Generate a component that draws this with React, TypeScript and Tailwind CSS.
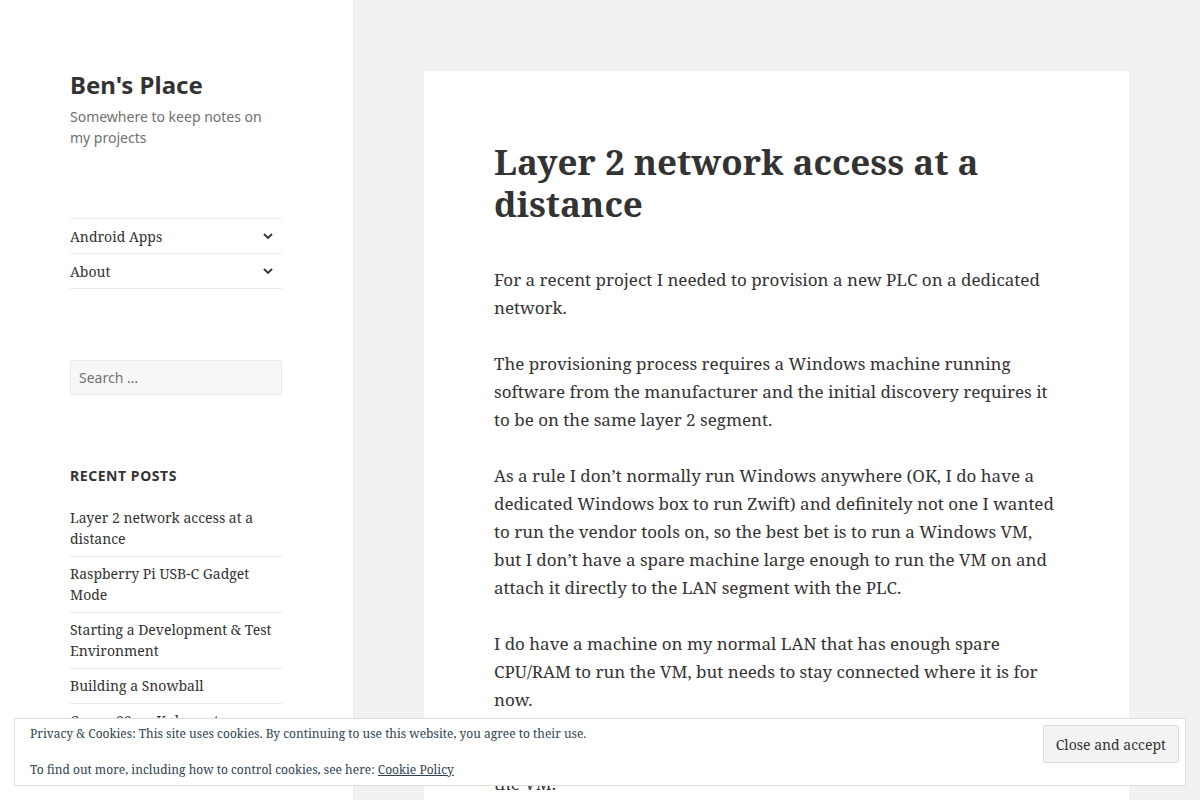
import { clsx } from "clsx";

const serif = "font-['Noto_Serif','DejaVu_Serif',serif]";
const sans = "font-['Noto_Sans',sans-serif]";

const menu = ["Android Apps", "About"];

const recentPosts = [
  "Layer 2 network access at a distance",
  "Raspberry Pi USB-C Gadget Mode",
  "Starting a Development & Test Environment",
  "Building a Snowball",
  "Canon 99 on Kubernetes",
];

const paragraphs = [
  "For a recent project I needed to provision a new PLC on a dedicated network.",
  "The provisioning process requires a Windows machine running software from the manufacturer and the initial discovery requires it to be on the same layer 2 segment.",
  "As a rule I don\u2019t normally run Windows anywhere (OK, I do have a dedicated Windows box to run Zwift) and definitely not one I wanted to run the vendor tools on, so the best bet is to run a Windows VM, but I don\u2019t have a spare machine large enough to run the VM on and attach it directly to the LAN segment with the PLC.",
  "I do have a machine on my normal LAN that has enough spare CPU/RAM to run the VM, but needs to stay connected where it is for now.",
];

function Chevron() {
  return (
    <svg width="12" height="8" viewBox="0 0 12 8" className="text-[#333]">
      <polyline
        points="2,2 6,6 10,2"
        fill="none"
        stroke="currentColor"
        strokeWidth="1.8"
      />
    </svg>
  );
}

function Sidebar() {
  return (
    <aside className="w-[353px] shrink-0 bg-white shadow-[0_0_1px_rgba(0,0,0,0.15)]">
      <div className="w-[212px] ml-[70px] pt-[70px]">
        <h1 className={clsx(sans, "text-[24px] leading-[30px] font-bold text-[#333]")}>
          Ben's Place
        </h1>
        <p className={clsx(sans, "mt-[6px] text-[14px] leading-[21px] text-[#707070]")}>
          Somewhere to keep notes on my projects
        </p>

        <ul className="mt-[70px] border-t border-[#eaeaea]">
          {menu.map((item) => (
            <li
              key={item}
              className="flex h-[35px] items-center justify-between border-b border-[#eaeaea]"
            >
              <span className={clsx(serif, "text-[14px] text-[#333]")}>{item}</span>
              <span className="mr-[8px] flex">
                <Chevron />
              </span>
            </li>
          ))}
        </ul>

        <div
          className={clsx(
            sans,
            "mt-[71px] h-[35px] border border-[#eaeaea] bg-[#f7f7f7] px-[8px] text-[14px] leading-[33px] text-[#707070]",
          )}
        >
          Search &hellip;
        </div>

        <h2
          className={clsx(
            sans,
            "mt-[71px] text-[14px] leading-[20px] font-bold uppercase tracking-[0.04em] text-[#333]",
          )}
        >
          Recent Posts
        </h2>
        <ul className="mt-[21px]">
          {recentPosts.map((post, i) => (
            <li
              key={post}
              className={clsx(
                serif,
                "pb-[7px] text-[14px] leading-[21px] text-[#333]",
                i === 0 ? "pt-0" : "border-t border-[#eaeaea] pt-[6px]",
              )}
            >
              {post}
            </li>
          ))}
        </ul>
      </div>
    </aside>
  );
}

function Article() {
  return (
    <main className="pl-[71px] pt-[71px]">
      <article className="w-[705px] bg-white px-[70px] pt-[70px] pb-[70px]">
        <h1 className={clsx(serif, "text-[35px] leading-[42px] font-bold text-[#333]")}>
          Layer 2 network access at a distance
        </h1>
        <div className={clsx(serif, "mt-[41px] text-[17px] leading-[28px] text-[#333]")}>
          {paragraphs.map((p) => (
            <p key={p} className="mb-[28px]">
              {p}
            </p>
          ))}
          <p className="mb-[28px]">
            So I needed a way to stretch that layer 2 segment all the way to
            <br />
            the VM.
          </p>
        </div>
      </article>
    </main>
  );
}

function CookieBanner() {
  return (
    <div className="fixed bottom-[14px] left-[14px] right-[14px] flex h-[68px] items-start justify-between border border-[#dedede] bg-white pl-[15px] pr-[6px]">
      <div className={clsx(serif, "mt-[6px] text-[12px] text-[#2e4453]")}>
        <p className="leading-[18px]">
          Privacy &amp; Cookies: This site uses cookies. By continuing to use this website,
          you agree to their use.
        </p>
        <p className="mt-[18px] leading-[18px]">
          To find out more, including how to control cookies, see here:{" "}
          <a href="#" className="underline">
            Cookie Policy
          </a>
        </p>
      </div>
      <button
        className={clsx(
          serif,
          "mt-[6px] h-[38px] rounded-[2px] border border-[#dcdcdc] bg-[#f3f3f3] px-[12px] text-[14px] text-[#333]",
        )}
      >
        Close and accept
      </button>
    </div>
  );
}

export default function App() {
  return (
    <div className="flex min-h-screen bg-[#f1f1f1]">
      <Sidebar />
      <Article />
      <CookieBanner />
    </div>
  );
}
